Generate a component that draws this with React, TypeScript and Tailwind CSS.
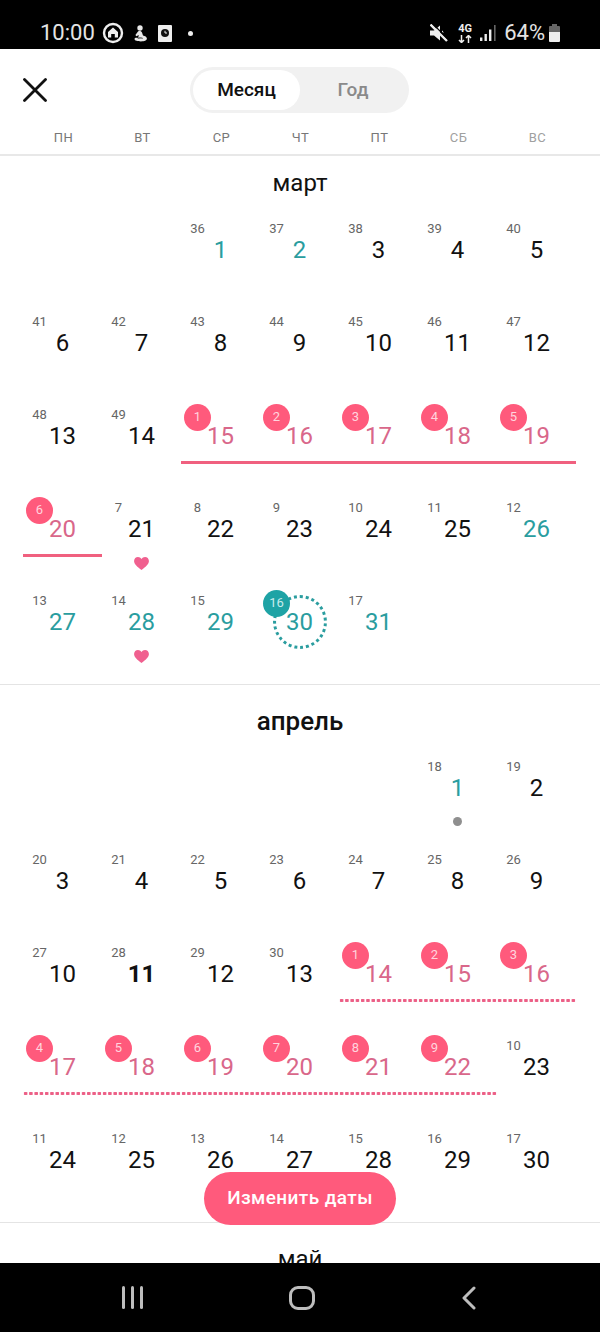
const pink = "text-[#d9678a]";
const teal = "text-[#2a9d9f]";

type Day = {
  week?: number;
  day?: number;
  color?: string;
  badge?: "pink" | "teal";
  line?: "solid" | "dotted";
  heart?: boolean;
  dot?: boolean;
  ring?: boolean;
  bold?: boolean;
};

const weekdays = [
  ["ПН", "text-[#777]"],
  ["ВТ", "text-[#777]"],
  ["СР", "text-[#777]"],
  ["ЧТ", "text-[#777]"],
  ["ПТ", "text-[#777]"],
  ["СБ", "text-[#a0a0a0]"],
  ["ВС", "text-[#a0a0a0]"],
];

const march: Day[] = [
  {},
  {},
  { week: 36, day: 1, color: teal },
  { week: 37, day: 2, color: teal },
  { week: 38, day: 3 },
  { week: 39, day: 4 },
  { week: 40, day: 5 },
  { week: 41, day: 6 },
  { week: 42, day: 7 },
  { week: 43, day: 8 },
  { week: 44, day: 9 },
  { week: 45, day: 10 },
  { week: 46, day: 11 },
  { week: 47, day: 12 },
  { week: 48, day: 13 },
  { week: 49, day: 14 },
  { week: 1, day: 15, color: pink, badge: "pink", line: "solid" },
  { week: 2, day: 16, color: pink, badge: "pink", line: "solid" },
  { week: 3, day: 17, color: pink, badge: "pink", line: "solid" },
  { week: 4, day: 18, color: pink, badge: "pink", line: "solid" },
  { week: 5, day: 19, color: pink, badge: "pink", line: "solid" },
  { week: 6, day: 20, color: pink, badge: "pink", line: "solid" },
  { week: 7, day: 21, heart: true },
  { week: 8, day: 22 },
  { week: 9, day: 23 },
  { week: 10, day: 24 },
  { week: 11, day: 25 },
  { week: 12, day: 26, color: teal },
  { week: 13, day: 27, color: teal },
  { week: 14, day: 28, color: teal, heart: true },
  { week: 15, day: 29, color: teal },
  { week: 16, day: 30, color: teal, badge: "teal", ring: true },
  { week: 17, day: 31, color: teal },
];

const april: Day[] = [
  {},
  {},
  {},
  {},
  {},
  { week: 18, day: 1, color: teal, dot: true },
  { week: 19, day: 2 },
  { week: 20, day: 3 },
  { week: 21, day: 4 },
  { week: 22, day: 5 },
  { week: 23, day: 6 },
  { week: 24, day: 7 },
  { week: 25, day: 8 },
  { week: 26, day: 9 },
  { week: 27, day: 10 },
  { week: 28, day: 11, bold: true },
  { week: 29, day: 12 },
  { week: 30, day: 13 },
  { week: 1, day: 14, color: pink, badge: "pink", line: "dotted" },
  { week: 2, day: 15, color: pink, badge: "pink", line: "dotted" },
  { week: 3, day: 16, color: pink, badge: "pink", line: "dotted" },
  { week: 4, day: 17, color: pink, badge: "pink", line: "dotted" },
  { week: 5, day: 18, color: pink, badge: "pink", line: "dotted" },
  { week: 6, day: 19, color: pink, badge: "pink", line: "dotted" },
  { week: 7, day: 20, color: pink, badge: "pink", line: "dotted" },
  { week: 8, day: 21, color: pink, badge: "pink", line: "dotted" },
  { week: 9, day: 22, color: pink, badge: "pink", line: "dotted" },
  { week: 10, day: 23 },
  { week: 11, day: 24 },
  { week: 12, day: 25 },
  { week: 13, day: 26 },
  { week: 14, day: 27 },
  { week: 15, day: 28 },
  { week: 16, day: 29 },
  { week: 17, day: 30 },
];

function DayCell({ cell }: { cell: Day }) {
  if (!cell.day) return <div className="h-[93px]" />;
  const badgeClass =
    cell.badge === "pink"
      ? "bg-[#ff5a7c] text-[#ffd5de] z-10 pb-[3px]"
      : cell.badge === "teal"
        ? "bg-[#1ea3a5] text-[#c8ecec] z-10 pb-[3px]"
        : "text-[#666] pb-[6px]";
  return (
    <div className="h-[93px] flex flex-col">
      <div
        className={`relative ml-[3px] mt-[3px] w-[27px] h-[27px] shrink-0 flex items-center justify-center rounded-full text-[13px] leading-none ${badgeClass}`}
      >
        {cell.week}
      </div>
      <div
        className={`relative -mt-[9px] h-[28px] text-center text-[24px] leading-[28px] ${cell.bold ? "font-bold" : ""} ${cell.color ?? "text-[#111]"}`}
      >
        {cell.day}
        {cell.ring && (
          <div className="absolute left-1/2 top-1/2 -ml-[27px] -mt-[27px] w-[54px] h-[54px] rounded-full border-[3px] border-dotted border-[#2a9d9f]" />
        )}
      </div>
      {cell.line === "solid" && <div className="mt-[11px] h-[3px] bg-[#f0607f]" />}
      {cell.line === "dotted" && (
        <div className="mt-[11px] h-[3px] bg-[radial-gradient(circle,#ec5f86_1.6px,transparent_2px)] bg-[length:5.267px_3px]" />
      )}
      {cell.heart && (
        <svg viewBox="0 0 16 14" className="mt-[14px] mx-auto w-[15px] h-[13px]" fill="#f0608f">
          <path d="M8 14C3 10.2 0 7.6 0 4.3 0 1.8 1.9 0 4.2 0 5.8 0 7.2.8 8 2.2 8.8.8 10.2 0 11.8 0 14.1 0 16 1.8 16 4.3 16 7.6 13 10.2 8 14Z" />
        </svg>
      )}
      {cell.dot && <div className="mt-[15px] mx-auto w-[9px] h-[9px] rounded-full bg-[#8f8f8f]" />}
    </div>
  );
}

function Month({ title, days, strong }: { title: string; days: Day[]; strong?: boolean }) {
  return (
    <section className="border-b border-[#e4e4e4] pb-[4px] last:border-b-0">
      <h2 className={`h-[68px] pt-[20px] text-center leading-[32px] text-[#111] ${strong ? "text-[26px] font-medium" : "text-[24px]"}`}>
        {title}
      </h2>
      <div className="grid grid-cols-[repeat(7,79px)] px-[23px]">
        {days.map((cell, i) => (
          <DayCell key={i} cell={cell} />
        ))}
      </div>
    </section>
  );
}

function StatusBar() {
  return (
    <div className="h-[49px] shrink-0 bg-black flex items-end pb-[2px] pl-[40px] pr-[40px] text-[#e4e4e4]">
      <div className="flex items-center h-[28px] w-full">
        <span className="text-[22px] leading-none">10:00</span>
        <svg viewBox="0 0 22 22" className="ml-[7px] w-[22px] h-[22px]">
          <circle cx="11" cy="11" r="9" fill="none" stroke="#eee" strokeWidth="2.4" />
          <path d="M11 5.5 16 10v5.5h-3.2V12H9.2v3.5H6V10Z" fill="#eee" />
        </svg>
        <svg viewBox="0 0 16 17" className="ml-[8px] w-[16px] h-[17px]" fill="#e8e8e8">
          <circle cx="8" cy="3" r="2.7" />
          <path d="M6 6.5c1.7-.9 3.6-.2 4.1 1.3l.9 2.7c2 .4 3.9 1.4 3.9 3 0 1.9-2.6 2.9-6 2.9-3 0-6.4-.6-6.4-2.4 0-1.4 1.9-1.6 3.6-1.1L6.8 10 4.4 11.2l-1-1.3Z" />
          <path d="M5.8 13.3c1.3-.5 3.3-.5 4.8 0" stroke="#222" strokeWidth="1" fill="none" />
        </svg>
        <svg viewBox="0 0 14 17" className="ml-[10px] w-[14px] h-[17px]">
          <rect width="14" height="17" rx="1" fill="#eee" />
          <circle cx="7" cy="8" r="4" fill="#111" />
          <path d="M7 5.8V8h2" stroke="#eee" strokeWidth="1" fill="none" />
        </svg>
        <span className="ml-[16px] w-[5px] h-[5px] rounded-full bg-[#eee]" />
        <svg viewBox="0 0 18 18" className="ml-auto w-[18px] h-[18px]" fill="#eee">
          <path d="M0 6.5h4L10 1.5v15L4 11.5H0Z" />
          <path d="M12 6.5c1 .8 1.5 1.6 1.5 2.6L12 8Z" />
          <path d="M0.5 0.5 17 17" stroke="#eee" strokeWidth="2.4" />
          <path d="M2.5 -0.5 18 15" stroke="#000" strokeWidth="1.2" />
        </svg>
        <div className="ml-[10px] w-[14px] flex flex-col items-center">
          <span className="text-[11px] font-bold leading-[10px] text-[#eee]">4G</span>
          <svg viewBox="0 0 14 8" className="mt-[1px] w-[14px] h-[8px]" fill="none" stroke="#eee" strokeWidth="1.5">
            <path d="M3.5 0v7.5M1 5l2.5 2.5L6 5M10.5 8V.5M8 3l2.5-2.5L13 3" />
          </svg>
        </div>
        <svg viewBox="0 0 16 16" className="ml-[8px] w-[16px] h-[16px]">
          <rect x="0" y="12.5" width="2.4" height="3.5" fill="#eee" />
          <rect x="4.5" y="9" width="2.4" height="7" fill="#eee" />
          <rect x="9" y="4.5" width="2.4" height="11.5" fill="#eee" />
          <rect x="14" y="0" width="1.6" height="16" fill="#666" />
        </svg>
        <span className="ml-[8px] text-[22px] leading-none">64%</span>
        <svg viewBox="0 0 11 18" className="ml-[4px] w-[11px] h-[18px]">
          <path d="M3 0h5v2h2a1 1 0 0 1 1 1v5H0V3a1 1 0 0 1 1-1h2Z" fill="#666" />
          <path d="M0 8h11v9a1 1 0 0 1-1 1H1a1 1 0 0 1-1-1Z" fill="#eee" />
        </svg>
      </div>
    </div>
  );
}

function Header() {
  return (
    <header className="shrink-0 border-b-2 border-[#e8e8e8]">
      <div className="h-[80px] relative flex items-center justify-center">
        <svg viewBox="0 0 24 24" className="absolute left-[23px] top-[29px] w-[24px] h-[24px]" fill="none" stroke="#111" strokeWidth="2.8" strokeLinecap="round">
          <path d="M1.5 1.5 22.5 22.5M22.5 1.5 1.5 22.5" />
        </svg>
        <div className="w-[219px] h-[46px] mt-[2px] mr-[1px] rounded-full bg-[#f1f1f1] p-[3px] flex">
          <div className="w-[107px] rounded-full bg-white flex items-center justify-center text-[19px] font-medium text-[#111]">
            Месяц
          </div>
          <div className="flex-1 flex items-center justify-center text-[19px] font-medium text-[#8a8a8a]">Год</div>
        </div>
      </div>
      <div className="grid grid-cols-[repeat(7,79px)] pl-[24px] h-[25px] items-start">
        {weekdays.map(([label, color]) => (
          <div key={label} className={`text-center text-[13px] leading-[18px] tracking-[0.5px] ${color}`}>
            {label}
          </div>
        ))}
      </div>
    </header>
  );
}

function NavBar() {
  return (
    <nav className="h-[69px] shrink-0 bg-black relative flex items-center">
      <div className="absolute left-[122px] top-[23px] flex gap-[6px]">
        <span className="w-[3px] h-[23px] bg-[#bdbdbd] rounded-sm" />
        <span className="w-[3px] h-[23px] bg-[#bdbdbd] rounded-sm" />
        <span className="w-[3px] h-[23px] bg-[#bdbdbd] rounded-sm" />
      </div>
      <div className="absolute left-[289px] top-[23px] w-[26px] h-[24px] rounded-[9px] border-[3px] border-[#bdbdbd]" />
      <svg viewBox="0 0 14 24" className="absolute left-[462px] top-[23px] w-[14px] h-[24px]" fill="none" stroke="#bdbdbd" strokeWidth="3" strokeLinecap="round" strokeLinejoin="round">
        <path d="M12 2 2 12l10 10" />
      </svg>
    </nav>
  );
}

export default function App() {
  return (
    <div className="relative w-[600px] h-[1332px] flex flex-col overflow-hidden bg-white font-['Roboto',sans-serif]">
      <StatusBar />
      <Header />
      <main className="flex-1 min-h-0 overflow-hidden">
        <div className="-mt-[9px]">
          <Month title="март" days={march} />
          <Month title="апрель" days={april} strong />
          <Month title="май" days={[]} />
        </div>
      </main>
      <button className="absolute left-[204px] top-[1172px] w-[192px] h-[53px] rounded-full bg-[#ff5a7c] text-white text-[19px] font-medium tracking-[0.4px]">
        Изменить даты
      </button>
      <NavBar />
    </div>
  );
}
